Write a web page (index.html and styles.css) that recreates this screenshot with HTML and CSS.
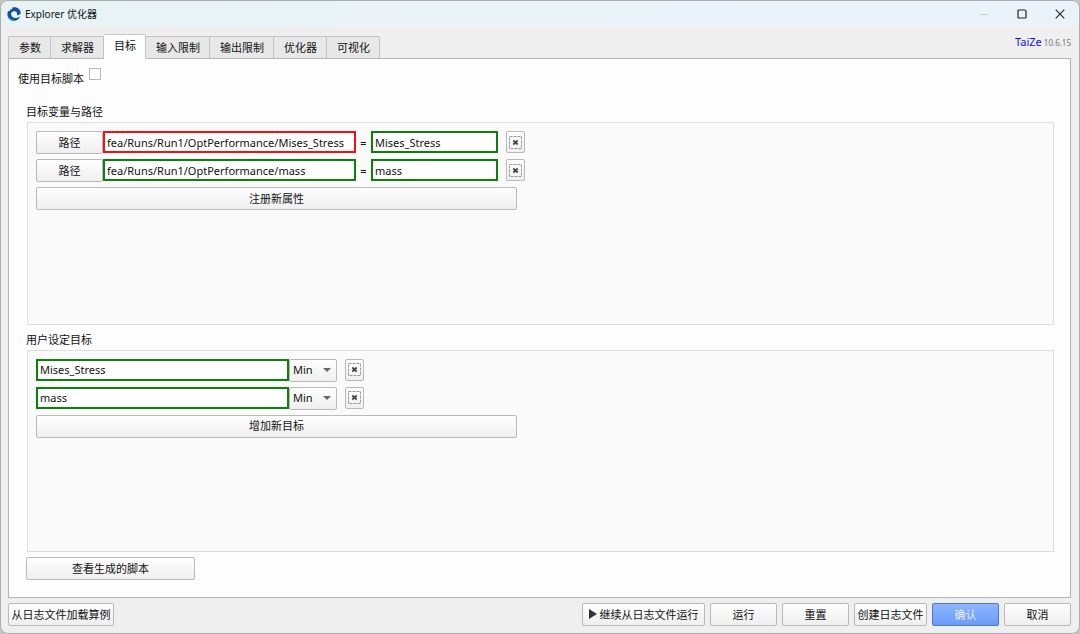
FILE: index.html
```html
<!DOCTYPE html>
<html lang="zh-CN">
<head>
  <meta charset="UTF-8">
  <title>Explorer 优化器</title>
  <meta name="viewport" content="width=device-width, initial-scale=1.0">
  <link rel="stylesheet" href="styles.css">
</head>
<body>
  <svg class="defs" width="0" height="0">
    <symbol id="remove" viewBox="0 0 13 13">
      <rect x="0.5" y="0.5" width="12" height="12" fill="none" stroke="#999" stroke-dasharray="3 1"/>
      <path d="M4.3 4.5l4.4 4M8.7 4.5l-4.4 4" stroke="#444" stroke-width="1.7"/>
    </symbol>
  </svg>

  <div class="window">
    <header class="titlebar">
      <svg class="logo" viewBox="0 0 14 14">
        <path d="M7.500 .3C11 .3 13.600 2.800 13.800 6.200C12.600 7.600 11.400 8.200 10 8.300C10.600 6 9.600 4.300 7.500 4.200C5.300 4.100 3.900 5.700 4.100 7.500C4.300 9.800 6.700 11.200 9.300 10.900C11 10.700 12.400 9.900 13.300 8.900C12.400 11.900 9.800 13.700 7 13.700C3.200 13.700 .4 10.800 .4 7.200C.4 6 .7 5 1.200 4.100L3.200 4L3 2.400L5 2.300L5.200 .700C5.900 .4 6.700 .3 7.500 .3z" fill="#14509b"/>
        <path d="M.8 9C2.200 11.400 5 12.900 8.800 12.900C7.200 13.900 4.800 13.900 3.100 12.700C2 11.900 1.100 10.700 .8 9z" fill="#2c8bd0"/>
      </svg>
      <span class="title">Explorer 优化器</span>
      <div class="controls">
        <button class="control" aria-label="最小化" disabled><svg viewBox="0 0 10 10"><path d="M1 5.500h8" stroke="#c5ced3"/></svg></button>
        <button class="control" aria-label="最大化"><svg viewBox="0 0 10 10"><rect x="1" y="1" width="8" height="8" rx="1" fill="none" stroke="#222" stroke-width="1.200"/></svg></button>
        <button class="control" aria-label="关闭"><svg viewBox="0 0 10 10"><path d="M.7.700l8.600 8.600M9.300.700l-8.600 8.600" stroke="#222" stroke-width="1.100"/></svg></button>
      </div>
    </header>

    <nav class="tabs">
      <button class="tab">参数</button>
      <button class="tab">求解器</button>
      <button class="tab active">目标</button>
      <button class="tab">输入限制</button>
      <button class="tab">输出限制</button>
      <button class="tab">优化器</button>
      <button class="tab">可视化</button>
      <div class="version"><span class="brand">TaiZe</span> 10.6.15</div>
    </nav>

    <main class="panel">
      <div class="script-option">
        <label for="use-script">使用目标脚本</label>
        <input type="checkbox" id="use-script">
      </div>

      <h2>目标变量与路径</h2>
      <section class="group">
        <div class="row">
          <button class="btn path">路径</button>
          <input class="field long invalid" type="text" aria-label="路径 1" value="fea/Runs/Run1/OptPerformance/Mises_Stress">
          <span class="equals">=</span>
          <input class="field short" type="text" aria-label="变量 1" value="Mises_Stress">
          <button class="btn remove" aria-label="删除"><svg><use href="#remove"/></svg></button>
        </div>
        <div class="row">
          <button class="btn path">路径</button>
          <input class="field long" type="text" aria-label="路径 2" value="fea/Runs/Run1/OptPerformance/mass">
          <span class="equals">=</span>
          <input class="field short" type="text" aria-label="变量 2" value="mass">
          <button class="btn remove" aria-label="删除"><svg><use href="#remove"/></svg></button>
        </div>
        <button class="btn add">注册新属性</button>
      </section>

      <h2>用户设定目标</h2>
      <section class="group">
        <div class="row">
          <input class="field long" type="text" aria-label="目标 1" value="Mises_Stress">
          <span class="select">
            <select class="btn" aria-label="方向 1"><option>Min</option><option>Max</option></select>
          </span>
          <button class="btn remove" aria-label="删除"><svg><use href="#remove"/></svg></button>
        </div>
        <div class="row">
          <input class="field long" type="text" aria-label="目标 2" value="mass">
          <span class="select">
            <select class="btn" aria-label="方向 2"><option>Min</option><option>Max</option></select>
          </span>
          <button class="btn remove" aria-label="删除"><svg><use href="#remove"/></svg></button>
        </div>
        <button class="btn add">增加新目标</button>
      </section>

      <button class="btn view-script">查看生成的脚本</button>
    </main>

    <footer class="actions">
      <button class="btn load">从日志文件加载算例</button>
      <button class="btn resume"><svg class="play" viewBox="0 0 8 10"><path d="M0 0l8 5l-8 5z" fill="#333"/></svg>继续从日志文件运行</button>
      <button class="btn">运行</button>
      <button class="btn">重置</button>
      <button class="btn create">创建日志文件</button>
      <button class="btn primary">确认</button>
      <button class="btn">取消</button>
    </footer>
  </div>
</body>
</html>
```

FILE: styles.css
```css
* {
  box-sizing: border-box;
}

body {
  margin: 0;
  background-color: #c4c4c4;
  color: #111;
  font-family: "Noto Sans", "Noto Sans CJK SC", sans-serif;
  font-size: 11px;
  line-height: 16px;
}

button, input, select {
  font: inherit;
  color: inherit;
  margin: 0;
}

button {
  padding: 0;
  white-space: nowrap;
}

.defs {
  position: absolute;
}

.window {
  display: flex;
  flex-direction: column;
  min-height: 100vh;
  background-color: #efefef;
  border: 1px solid #adadad;
  border-radius: 8px;
  overflow: hidden;
}

.titlebar {
  display: flex;
  align-items: center;
  height: 25px;
  padding-left: 6px;
  background: linear-gradient(to right, #e8f3f6, #eaf3fa);
}

.logo {
  width: 14px;
  height: 14px;
  margin-right: 4px;
}

.title {
  font-size: 10px;
}

.controls {
  display: flex;
  margin-left: auto;
}

.control {
  display: flex;
  align-items: center;
  justify-content: center;
  width: 38px;
  height: 24px;
  border: 0;
  background: none;
}

.control svg {
  width: 10px;
  height: 10px;
}

.tabs {
  display: flex;
  align-items: flex-end;
  height: 33px;
  margin: 0 8px 0 7px;
  position: relative;
  z-index: 1;
}

.tab {
  height: 23px;
  padding: 0 9px 0 10px;
  border: 1px solid #c4c4c4;
  border-left: 0;
  border-bottom-color: #b4b4b4;
  background-color: #e8e8e8;
}

.tab:first-child {
  border-left: 1px solid #c4c4c4;
  border-top-left-radius: 2px;
}

.tab:nth-last-child(2) {
  border-top-right-radius: 2px;
}

.tab.active {
  height: 25px;
  padding-bottom: 2px;
  border-bottom-color: #fdfdfd;
  border-radius: 2px 2px 0 0;
  background-color: #fdfdfd;
}

.version {
  margin-left: auto;
  align-self: center;
  font-size: 8px;
  color: #777;
}

.brand {
  font-size: 11px;
  color: #1010f0;
}

.panel {
  flex: 1;
  display: flex;
  flex-direction: column;
  margin: -1px 8px 0 7px;
  padding: 9px 17px 17px;
  border: 1px solid #b4b4b4;
  background-color: #fdfdfd;
}

.script-option {
  display: flex;
  align-items: flex-start;
  gap: 5px;
  height: 28px;
  margin-left: -8px;
}

.script-option label {
  margin-top: 3px;
}

.script-option input {
  appearance: none;
  width: 12px;
  height: 12px;
  border: 1px solid #b8b8b8;
  background-color: #fff;
}

h2 {
  margin: 8px 0 2px;
  font-size: 11px;
  font-weight: normal;
  line-height: 16px;
}

.group {
  flex: 1;
  display: flex;
  flex-direction: column;
  gap: 5px;
  margin: 0 -1px 0 1px;
  padding: 8px;
  border: 1px solid #dedede;
  background-color: #fafafa;
}

.group + h2 {
  margin-top: 7px;
}

.row {
  display: flex;
  align-items: flex-start;
}

.btn {
  height: 23px;
  min-width: 67px;
  border: 1px solid #b9b9b9;
  border-radius: 2px;
  background: linear-gradient(#fefefe, #efefef);
}

.field {
  height: 22px;
  padding: 0 2px;
  border: 2px solid #0a820a;
  border-radius: 0;
  background-color: #fff;
  outline: none;
}

.field.invalid {
  border-color: #f41010;
}

.long {
  width: 253px;
}

.short {
  width: 127px;
}

.equals {
  width: 15px;
  line-height: 23px;
  text-align: center;
}

.btn.remove {
  display: flex;
  align-items: center;
  justify-content: center;
  min-width: 19px;
  width: 19px;
  height: 22px;
  margin-left: 8px;
}

.remove svg {
  width: 13px;
  height: 13px;
}

.btn.add {
  width: 481px;
}

.select {
  position: relative;
}

.select .btn {
  display: block;
  appearance: none;
  min-width: 48px;
  width: 48px;
  padding: 0 3px;
}

.select::after {
  content: "";
  position: absolute;
  top: 9px;
  right: 6px;
  border: 4px solid transparent;
  border-top-color: #666;
  border-bottom: 0;
  pointer-events: none;
}

.view-script {
  align-self: flex-start;
  width: 169px;
  margin-top: 5px;
}

.actions {
  display: flex;
  gap: 5px;
  padding: 5px 8px 7px 7px;
}

.load {
  width: 106px;
  margin-right: auto;
}

.resume {
  width: 123px;
}

.play {
  width: 8px;
  height: 10px;
  margin-right: 3px;
}

.create {
  width: 73px;
}

.btn.primary {
  border-color: #4c78c4;
  background: linear-gradient(#8db4ff, #6c9bf8);
  color: #e6eeff;
}
```
